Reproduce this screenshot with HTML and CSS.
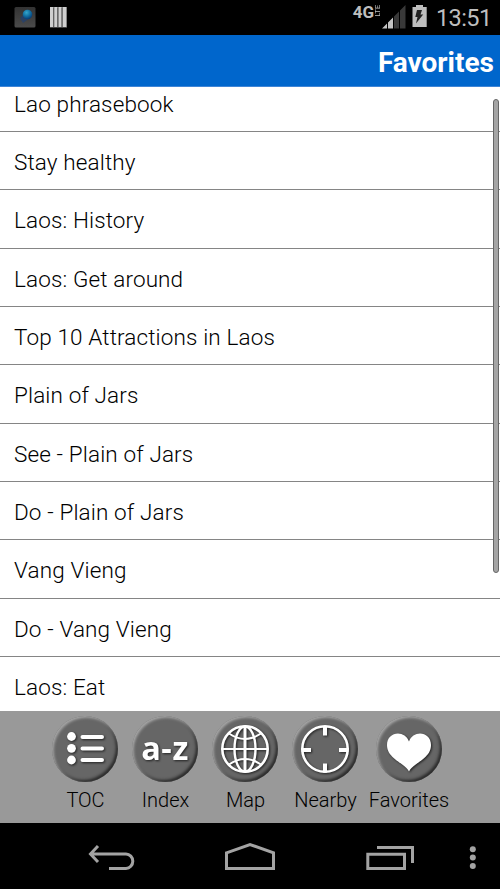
FILE: index.html
```html
<!DOCTYPE html>
<html lang="en">
<head>
<meta charset="utf-8">
<title>Favorites</title>
<link rel="stylesheet" href="styles.css">
</head>
<body>
<div class="screen">
  <div class="status">
    <svg class="notices" width="70" height="35" viewBox="0 0 70 35">
      <defs>
        <radialGradient id="ball" cx=".4" cy=".3" r=".7"><stop offset="0" stop-color="#35a5cb"/><stop offset=".5" stop-color="#1474a6"/><stop offset="1" stop-color="#063b75"/></radialGradient>
        <linearGradient id="tile" x1="0" y1="0" x2="0" y2="1"><stop offset="0" stop-color="#333"/><stop offset="1" stop-color="#4b4b4b"/></linearGradient>
      </defs>
      <rect x="14.5" y="7" width="21" height="20.5" rx="1.5" fill="url(#tile)"/>
      <path d="M20 18l5-5 5 5-7 5z" fill="#173f80" opacity=".55"/>
      <circle cx="27.5" cy="14.5" r="4.8" fill="url(#ball)"/>
      <rect x="50" y="7" width="17" height="20.5" fill="#858585"/>
      <path d="M50 7h3v20h-3zM54.500 7h2.500v20h-2.500zM58.800 7h2.500v20h-2.500zM63 7h3v20h-3z" fill="#cfcfcf"/>
      <path d="M53.500 8v19M57.700 8v19M62 8v19" stroke="#555" stroke-width=".7"/>
    </svg>
    <div class="phone">
      <span class="network">4G</span><span class="lte">LTE</span>
      <svg class="levels" width="48" height="35" viewBox="382 0 48 35">
        <path d="M383 28.500L388 23.500V28.500zM389 22.500L394 17.500V28.500H389z" fill="#c4c4c4"/>
        <path d="M395 16.500L400 11.500V28.500H395zM401 10.500L406.500 5V28.500H401z" fill="#393939"/>
        <path d="M413.500 7H417V5H424V7H427.700V27H413.500z" fill="#bebebe"/>
        <path d="M418 10h5l-1.500 4.500h2.700L417 23.500l1.500-6.500h-2.200z" fill="#222"/>
      </svg>
      <span class="clock">13:51</span>
    </div>
  </div>
  <header class="title">Favorites</header>
  <main class="content">
    <ul class="list">
      <li>Lao phrasebook</li>
      <li>Stay healthy</li>
      <li>Laos: History</li>
      <li>Laos: Get around</li>
      <li>Top 10 Attractions in Laos</li>
      <li>Plain of Jars</li>
      <li>See - Plain of Jars</li>
      <li>Do - Plain of Jars</li>
      <li>Vang Vieng</li>
      <li>Do - Vang Vieng</li>
      <li>Laos: Eat</li>
    </ul>
    <div class="scrollbar"></div>
  </main>
  <nav class="tabs">
    <div class="tab"><span class="disc">
      <svg width="66" height="66" viewBox="0 0 66 66"><g fill="#fff"><circle cx="19.500" cy="20.500" r="4.400"/><circle cx="19.500" cy="32.300" r="4.400"/><circle cx="19.500" cy="44" r="4.400"/></g><path d="M30.500 21h19.500M30.500 32.500h19.500M30.500 44h19.500" stroke="#fff" stroke-width="4" stroke-linecap="round"/></svg>
    </span><span class="label">TOC</span></div>
    <div class="tab"><span class="disc"><span class="az">a-z</span></span><span class="label">Index</span></div>
    <div class="tab"><span class="disc">
      <svg width="66" height="66" viewBox="0 0 66 66" fill="none" stroke="#fff" stroke-width="2"><circle cx="33" cy="33" r="22.700" stroke-width="2.600"/><path d="M33 10.500v45" stroke-width="3"/><path d="M10 33h46M17 17.500q16 11 32 0M17 48.500q16-11 32 0"/><ellipse cx="33" cy="33" rx="10.500" ry="22.500" stroke-width="2.400"/></svg>
    </span><span class="label">Map</span></div>
    <div class="tab"><span class="disc">
      <svg width="66" height="66" viewBox="0 0 66 66" fill="none" stroke="#fff"><circle cx="33" cy="33" r="22.700" stroke-width="2.600"/><path d="M33 10v9.500M33 47.500v9M9.500 34H19M47 34h9.500" stroke-width="4"/></svg>
    </span><span class="label">Nearby</span></div>
    <div class="tab wide"><span class="disc">
      <svg width="66" height="66" viewBox="0 0 66 66"><path d="M33 55.500C29 47 11 43 11 29C11 15 29 13.500 33 25.500C37 13.500 55 15 55 29C55 43 37 47 33 55.500z" fill="#fff"/></svg>
    </span><span class="label">Favorites</span></div>
  </nav>
  <div class="system">
    <svg width="500" height="66" viewBox="0 823 500 66" fill="none" stroke="#a3a3a3" stroke-width="3">
      <path d="M90 854h36a6.800 7.200 0 0 1 0 14.400H109M98 846l-7.500 8 7.500 8"/>
      <path d="M226.500 852.800L250 844.500l23.500 8.300v15.600h-47z"/>
      <path d="M367.800 854.300h36.700v14.200h-36.700zM377 847.500h35.500V863"/>
      <g fill="#a3a3a3" stroke="none"><circle cx="472.800" cy="849.300" r="3"/><circle cx="472.800" cy="857.600" r="3"/><circle cx="472.800" cy="866" r="3"/></g>
    </svg>
  </div>
</div>
</body>
</html>
```
FILE: styles.css
```css
* { box-sizing: border-box; }
body { margin: 0; font-family: Roboto, "Liberation Sans", sans-serif; }
.screen { width: 500px; height: 889px; display: flex; flex-direction: column; overflow: hidden; background: #000; }
.status { height: 34.500px; flex: none; display: flex; justify-content: space-between; color: #bebebe; }
.phone { display: flex; align-items: flex-start; padding-right: 9px; }
.network { font-size: 17px; font-weight: 700; line-height: 25px; }
.lte { writing-mode: vertical-rl; transform: rotate(180deg); font-size: 8px; line-height: 7px; margin: 5px 0 0 0; letter-spacing: -.3px; }
.clock { width: 55px; margin-left: 7px; font-size: 23.500px; line-height: 36px; font-weight: 400; letter-spacing: -.6px; white-space: nowrap; }
.title { height: 52px; flex: none; padding-right: 6px; background: #0066cc; border-bottom: 1px solid #3f85d6; color: #fff; font-size: 28px; font-weight: 700; line-height: 55px; text-align: right; }
.content { height: 624.500px; flex: none; position: relative; overflow: hidden; background: #fff; }
.list { list-style: none; margin: -13px 0 0; padding: 0; }
.list li { height: 58.360px; padding-left: 14px; border-bottom: 1px solid #858585; color: #000; font-size: 22.500px; font-weight: 350; line-height: 60px; letter-spacing: .13px; }
.scrollbar { position: absolute; top: 12px; right: 1px; width: 6px; height: 474px; border-radius: 3px; background: #a5a5a5; border: 1px solid #666; }
.tabs { height: 112px; flex: none; display: flex; padding: 5px 0 0 45px; background: #999; }
.tab { width: 80px; display: flex; flex-direction: column; align-items: center; }
.tab.wide { width: 87px; }
.disc { width: 66px; height: 66px; display: flex; align-items: center; justify-content: center; border-radius: 50%; background: #666; box-shadow: inset 1.500px 1.500px 3px #aaa, inset -2px -2px 3px #2a2a2a; }
.disc svg, .az { filter: drop-shadow(1px 1px 1px #222); }
.az { color: #fff; font: 700 32.500px/60px "Open Sans", sans-serif; letter-spacing: .6px; padding-bottom: 3px; }
.label { font-size: 20px; line-height: 24px; margin-top: 6px; padding-left: 1px; color: #000; font-weight: 350; white-space: nowrap; }
.system { height: 66px; flex: none; }
.system svg { display: block; }
```
